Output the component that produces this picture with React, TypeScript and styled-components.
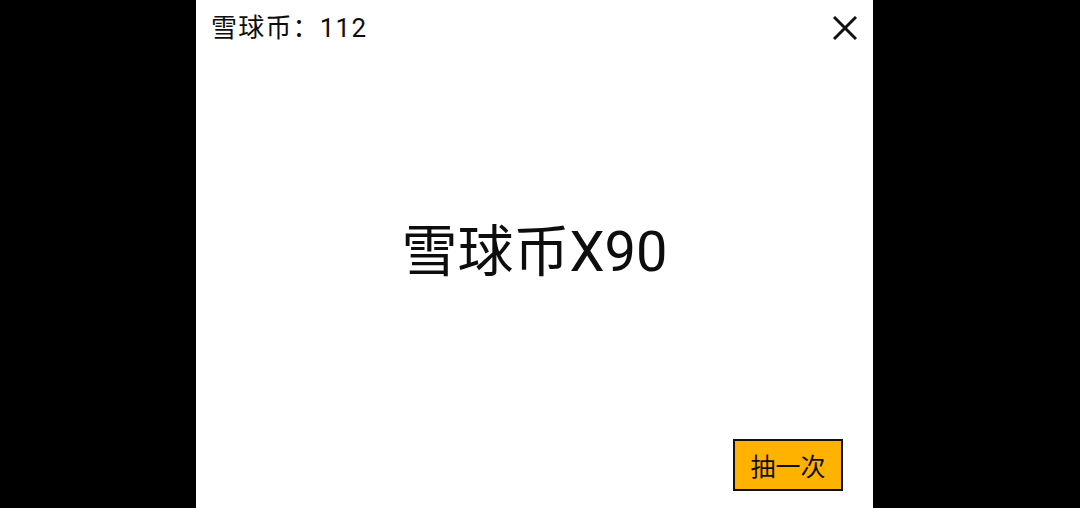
import React from "react";
import styled, { createGlobalStyle } from "styled-components";

const Global = createGlobalStyle`
  html, body { margin: 0; padding: 0; background: #000; }
  body { font-family: Roboto, "Noto Sans CJK SC", sans-serif; }
`;

const Screen = styled.div`
  width: 1080px;
  height: 508px;
  background: #000;
  display: flex;
`;

const Panel = styled.div`
  margin-left: 196px;
  width: 677px;
  height: 508px;
  background: #fff;
  display: flex;
  flex-direction: column;
  color: #0d0d0d;
`;

const Header = styled.div`
  display: flex;
  justify-content: space-between;
  align-items: center;
  padding: 8px 16px 0 15px;
  height: 40px;
`;

const Balance = styled.div`
  font-size: 26px;
  line-height: 36px;
  letter-spacing: 1.2px;
`;

const CloseButton = styled.button`
  border: none;
  background: none;
  padding: 0;
  width: 24px;
  height: 24px;
  display: flex;
  cursor: pointer;
`;

const Prize = styled.div`
  flex: 1;
  display: flex;
  align-items: center;
  justify-content: center;
  font-size: 56px;
  padding-top: 6px;
`;

const Footer = styled.div`
  display: flex;
  justify-content: flex-end;
  padding: 0 30px 17px 0;
`;

const DrawButton = styled.button`
  width: 110px;
  height: 52px;
  box-sizing: border-box;
  border: 2.5px solid #111;
  background: #ffb300;
  font-family: Roboto, "Noto Sans CJK SC", sans-serif;
  font-size: 25px;
  color: #111;
  padding: 0;
  cursor: pointer;
`;

export default function App() {
  return (
    <>
      <Global />
      <Screen>
        <Panel>
          <Header>
            <Balance>雪球币：112</Balance>
            <CloseButton aria-label="close">
              <svg width="24" height="24" viewBox="0 0 24 24">
                <path d="M1 1 L23 23 M23 1 L1 23" stroke="#111" strokeWidth="3" />
              </svg>
            </CloseButton>
          </Header>
          <Prize>雪球币X90</Prize>
          <Footer>
            <DrawButton>抽一次</DrawButton>
          </Footer>
        </Panel>
      </Screen>
    </>
  );
}
